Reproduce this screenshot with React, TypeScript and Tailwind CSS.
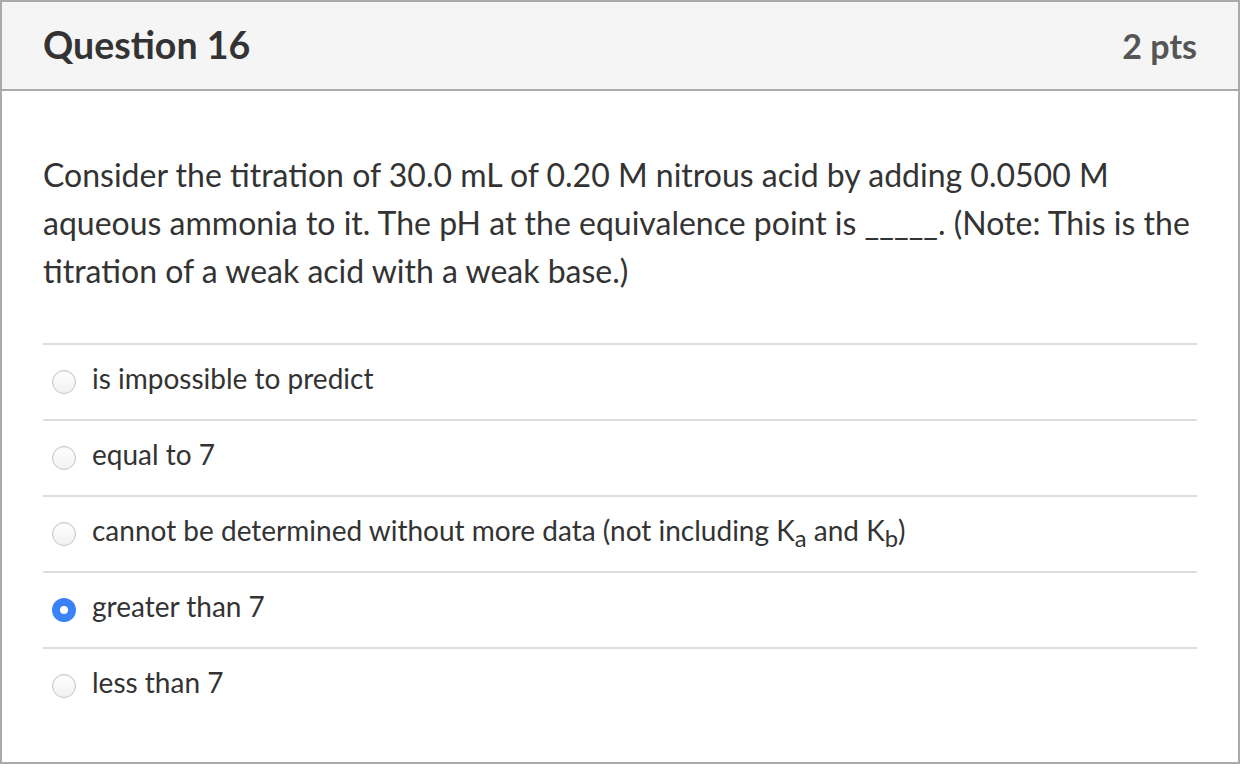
import React from 'react';

const options = [
  { id: 'a', label: <>is impossible to predict</> },
  { id: 'b', label: <>equal to 7</> },
  {
    id: 'c',
    label: (
      <>
        cannot be determined without more data (not including K<sub className="text-[0.85em]">a</sub> and K
        <sub className="text-[0.85em]">b</sub>)
      </>
    ),
  },
  { id: 'd', label: <>greater than 7</>, checked: true },
  { id: 'e', label: <>less than 7</> },
];

const Radio = ({ checked }: { checked?: boolean }) =>
  checked ? (
    <span className="flex h-6 w-6 shrink-0 items-center justify-center rounded-full bg-[#3b82f6]">
      <span className="h-2 w-2 rounded-full bg-white" />
    </span>
  ) : (
    <span className="h-6 w-6 shrink-0 rounded-full border border-[#c4c4c4] bg-gradient-to-b from-white to-[#f1f1f1] shadow-[inset_0_1px_1px_rgba(0,0,0,0.06)]" />
  );

export default function App() {
  return (
    <div className="h-[768px] w-[1242px] bg-white" style={{ fontFamily: 'Lato, "Noto Sans", sans-serif' }}>
      <div className="h-[764px] w-[1240px] border-2 border-[#aaaaaa]">
        <div className="flex h-[89px] items-center justify-between border-b-2 border-[#aaaaaa] bg-[#f5f5f5] px-[41px]">
          <h2 className="text-[37.5px] font-bold text-[#333333]">Question 16</h2>
          <span className="text-[34px] font-bold text-[#555555]">2 pts</span>
        </div>
        <div className="px-[41px] pt-[60px]">
          <p className="text-[32px] leading-[48px] text-[#333333]">
            Consider the titration of 30.0 mL of 0.20 M nitrous acid by adding 0.0500 M aqueous ammonia to it. The pH at the
            equivalence point is _____. (Note: This is the titration of a weak acid with a weak base.)
          </p>
          <div className="mt-[48px]">
            {options.map((o) => (
              <div key={o.id} className="flex h-[76px] items-center gap-4 border-t-2 border-[#dddddd] pl-[9px]">
                <Radio checked={o.checked} />
                <span className="pb-[8px] text-[28px] text-[#333333]">{o.label}</span>
              </div>
            ))}
          </div>
        </div>
      </div>
    </div>
  );
}
